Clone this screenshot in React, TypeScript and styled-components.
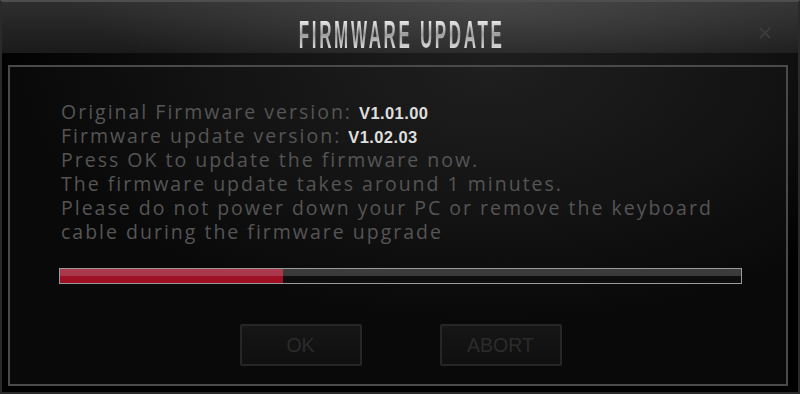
import React from "react";
import styled, { createGlobalStyle } from "styled-components";

const Global = createGlobalStyle`
  html, body { margin: 0; padding: 0; background: #000; }
  body { width: 800px; height: 394px; overflow: hidden; }
`;

const Window = styled.div`
  box-sizing: border-box;
  width: 800px;
  height: 394px;
  border: 2px solid #2a2a2a;
  border-top-color: #4e4e4e;
  display: flex;
  flex-direction: column;
  background: #000;
`;

const TitleBar = styled.div`
  position: relative;
  height: 51px;
  flex: none;
  display: flex;
  align-items: center;
  justify-content: center;
  background:
    radial-gradient(ellipse 420px 90px at 62% 0%, rgba(80,80,80,0.75), rgba(60,60,60,0) 100%),
    linear-gradient(180deg, #2e2e2e 0%, #222 60%, #1b1b1b 100%);
`;

const Title = styled.h1`
  margin: 0;
  font-family: "Liberation Sans", Arial, sans-serif;
  font-weight: 700;
  font-size: 39px;
  letter-spacing: 6px;
  line-height: 1;
  transform: scaleX(0.437);
  padding-top: 13px;
  padding-left: 6px;
  white-space: nowrap;
  background: linear-gradient(180deg, #ffffff 0%, #ececec 35%, #9c9c9c 62%, #cfcfcf 85%, #f2f2f2 100%);
  -webkit-background-clip: text;
  background-clip: text;
  color: transparent;
`;

const CloseButton = styled.div`
  position: absolute;
  right: 26px;
  top: 24px;
  width: 14px;
  height: 14px;
  display: flex;
`;

const Body = styled.div`
  flex: 1;
  padding: 12px 10px 6px 6px;
  display: flex;
  background:
    radial-gradient(ellipse 520px 260px at 62% 0%, #1e1e1e 0%, #121212 50%, rgba(0,0,0,0) 100%),
    #000;
`;

const Panel = styled.div`
  flex: 1;
  box-sizing: border-box;
  border: 2px solid #4a4a4a;
  padding: 33px 44px 0 49px;
  display: flex;
  flex-direction: column;
  background:
    radial-gradient(ellipse 560px 300px at 62% 0%, #1f1f1f 0%, #141414 45%, #090909 85%),
    #090909;
`;

const Message = styled.div`
  font-family: "Open Sans", "Noto Sans", sans-serif;
  font-size: 19.5px;
  letter-spacing: 2px;
  line-height: 24px;
  color: #555;
  padding-left: 2px;
`;

const Line = styled.div`
  white-space: nowrap;
  height: 24px;
`;

const Version = styled.span`
  font-family: "Liberation Sans", Arial, sans-serif;
  font-weight: 700;
  font-size: 16.5px;
  line-height: 1;
  letter-spacing: 0.4px;
  color: #dedede;
`;

const Progress = styled.div`
  margin-top: 24px;
  height: 16px;
  box-sizing: border-box;
  border: 1px solid #9a9a9a;
  display: flex;
  background: linear-gradient(180deg, #3c3c3c 0%, #3a3a3a 50%, #0e0e0e 50%, #0e0e0e 100%);
`;

const Fill = styled.div`
  height: 100%;
  background: linear-gradient(180deg, #ab3b4c 0%, #a73649 50%, #a01026 50%, #9d0f24 100%);
`;

const Buttons = styled.div`
  margin-top: 40px;
  display: flex;
  justify-content: center;
  gap: 78px;
`;

const Button = styled.button`
  width: 122px;
  height: 42px;
  box-sizing: border-box;
  border: 2px solid #262626;
  border-radius: 2px;
  background: linear-gradient(180deg, #161616 0%, #0f0f0f 100%);
  color: #2b2b2b;
  font-family: "Liberation Sans", Arial, sans-serif;
  font-size: 19.5px;
  padding: 0;
  cursor: default;
`;

export default function App() {
  const progress = 0.328;
  return (
    <>
      <Global />
      <Window>
        <TitleBar>
          <Title>FIRMWARE UPDATE</Title>
          <CloseButton>
            <svg width="14" height="14" viewBox="0 0 14 14">
              <path d="M2 2 L12 12 M12 2 L2 12" stroke="#3b3b3b" strokeWidth="2.2" />
            </svg>
          </CloseButton>
        </TitleBar>
        <Body>
          <Panel>
            <Message>
              <Line>Original Firmware version: <Version>V1.01.00</Version></Line>
              <Line>Firmware update version: <Version>V1.02.03</Version></Line>
              <Line>Press OK to update the firmware now.</Line>
              <Line>The firmware update takes around 1 minutes.</Line>
              <Line>Please do not power down your PC or remove the keyboard</Line>
              <Line>cable during the firmware upgrade</Line>
            </Message>
            <Progress>
              <Fill style={{ width: `${progress * 100}%` }} />
            </Progress>
            <Buttons>
              <Button>OK</Button>
              <Button>ABORT</Button>
            </Buttons>
          </Panel>
        </Body>
      </Window>
    </>
  );
}
